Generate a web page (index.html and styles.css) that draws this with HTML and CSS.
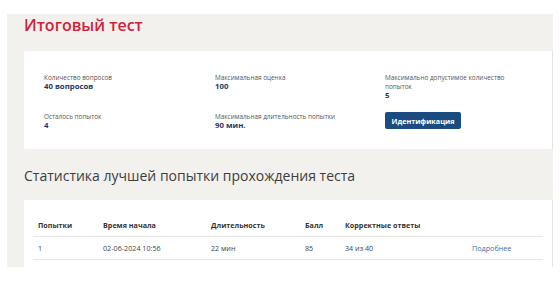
FILE: index.html
```html
<!DOCTYPE html>
<html lang="ru">
<head>
    <meta charset="UTF-8">
    <meta name="viewport" content="width=device-width, initial-scale=1.0">
    <title>Итоговый тест</title>
    <link rel="stylesheet" href="styles.css">
</head>
<body>
    <div class="panel">
        <h1 class="title">Итоговый тест</h1>

        <div class="card info-card">
            <div class="info-item">
                <div class="info-label">Количество вопросов</div>
                <div class="info-value">40 вопросов</div>
            </div>
            <div class="info-item">
                <div class="info-label">Максимальная оценка</div>
                <div class="info-value">100</div>
            </div>
            <div class="info-item">
                <div class="info-label narrow">Максимально допустимое количество попыток</div>
                <div class="info-value">5</div>
            </div>
            <div class="info-item">
                <div class="info-label">Осталось попыток</div>
                <div class="info-value">4</div>
            </div>
            <div class="info-item">
                <div class="info-label">Максимальная длительность попытки</div>
                <div class="info-value">90 мин.</div>
            </div>
            <div class="info-item">
                <button class="btn">Идентификация</button>
            </div>
        </div>

        <h2 class="section-title">Статистика лучшей попытки прохождения теста</h2>

        <div class="card table-card">
            <table class="stats">
                <thead>
                    <tr>
                        <th class="col-try">Попытки</th>
                        <th class="col-start">Время начала</th>
                        <th class="col-dur">Длительность</th>
                        <th class="col-score">Балл</th>
                        <th class="col-correct">Корректные ответы</th>
                        <th></th>
                    </tr>
                </thead>
                <tbody>
                    <tr>
                        <td>1</td>
                        <td>02-06-2024 10:56</td>
                        <td>22 мин</td>
                        <td>85</td>
                        <td>34 из 40</td>
                        <td><a class="more" href="#">Подробнее</a></td>
                    </tr>
                </tbody>
            </table>
        </div>
    </div>
</body>
</html>
```

FILE: styles.css
```css
body {
    margin: 0;
    background-color: #fff;
    font-family: "Open Sans", Arial, sans-serif;
    color: #333;
}

.panel {
    margin: 14px 0 0 7px;
    width: 546px;
    height: 253px;
    padding-left: 17px;
    box-sizing: border-box;
    background-color: #f2f1ee;
    overflow: hidden;
}

.title {
    margin: 0;
    padding-top: 2px;
    height: 35px;
    font-size: 16px;
    font-weight: 600;
    line-height: 19px;
    color: #d3203b;
}

.card {
    background-color: #fff;
    border-right: 1px solid #e4e4e4;
    border-radius: 2px 0 0 2px;
    width: 529px;
    box-sizing: border-box;
}

.info-card {
    display: grid;
    grid-template-columns: 171px 170px 1fr;
    align-items: start;
    align-content: start;
    row-gap: 12px;
    height: 98px;
    padding: 22px 20px 0 20px;
}

.info-label {
    font-size: 6.4px;
    line-height: 9px;
    color: #555;
}

.info-label.narrow {
    width: 124px;
}

.info-value {
    font-size: 7.8px;
    font-weight: 700;
    line-height: 9px;
    color: #1e3a63;
}

.btn {
    display: block;
    width: 76px;
    height: 17px;
    padding: 0;
    border: none;
    border-radius: 2px;
    background-color: #1b4c80;
    color: #fff;
    font-family: "Open Sans", Arial, sans-serif;
    font-size: 7.2px;
    font-weight: 700;
}

.section-title {
    margin: 0;
    height: 51px;
    font-size: 14px;
    font-weight: 400;
    line-height: 54px;
    color: #3d3d3d;
}

.table-card {
    height: 80px;
    padding: 14px 9px 0 9px;
}

.stats {
    width: 100%;
    border-collapse: collapse;
    font-size: 7.2px;
}

.stats th,
.stats td {
    text-align: left;
    padding: 0 0 0 5px;
    height: 22px;
    border-bottom: 1px solid #e6e6e6;
}

.stats th {
    font-weight: 700;
    color: #333;
}

.stats td {
    color: #444;
}

.col-try { width: 60px; }
.col-start { width: 103px; }
.col-dur { width: 89px; }
.col-score { width: 35px; }
.col-correct { width: 122px; }

.more {
    color: #46709c;
    text-decoration: none;
}
```
